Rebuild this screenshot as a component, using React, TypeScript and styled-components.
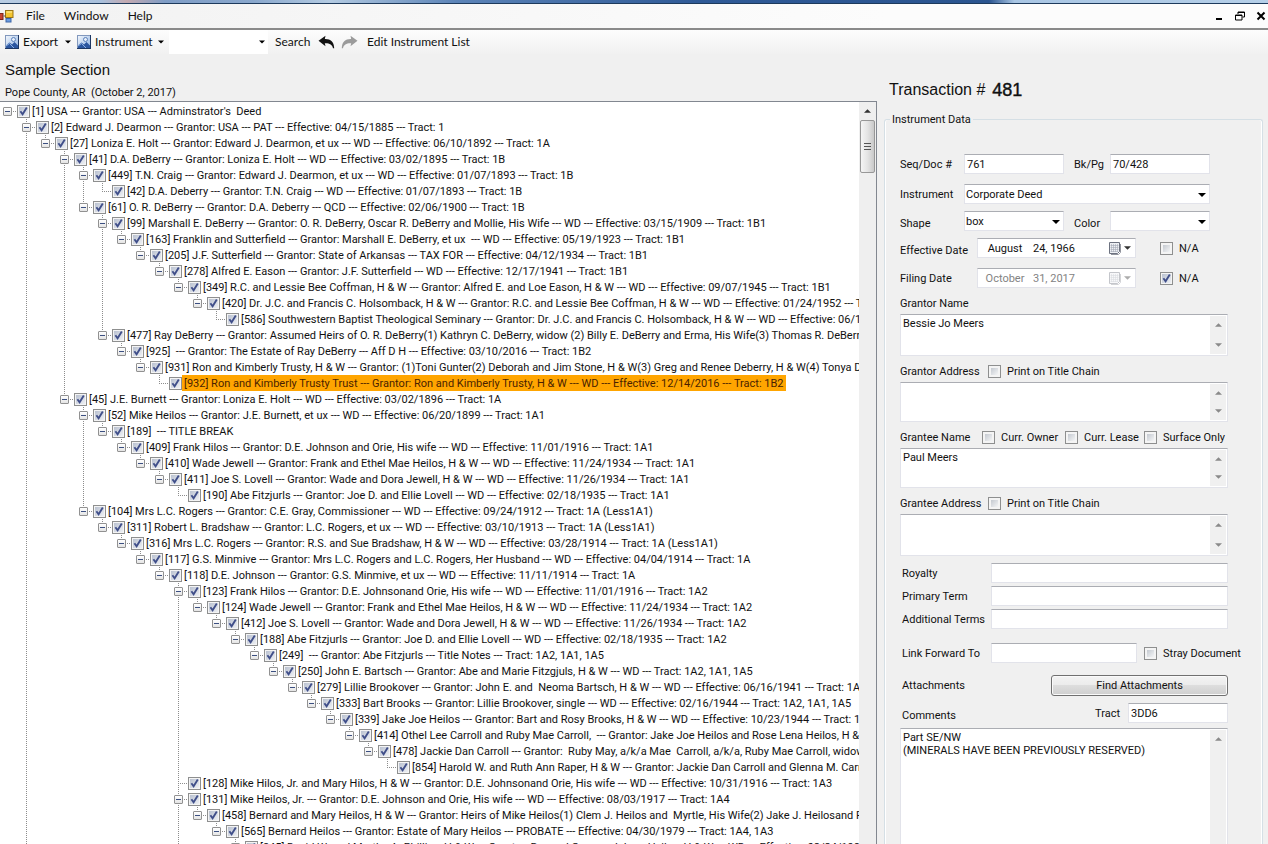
import React from "react";
import styled, { createGlobalStyle, css } from "styled-components";

const GlobalStyle = createGlobalStyle`
  *, *::before, *::after { box-sizing: border-box; }
  body {
    margin: 0;
    background: #f0f0f0;
    color: #111;
    font: 11px/16px Roboto, "Liberation Sans", Arial, sans-serif;
  }
  input, textarea, select, button { font: inherit; color: inherit; margin: 0; }
`;

const Window = styled.div`
  display: flex;
  flex-direction: column;
  height: 100vh;
  overflow: hidden;
`;

const TitleStrip = styled.div`
  flex: none;
  height: 4px;
  border-bottom: 1px solid #1d3a5c;
  background: linear-gradient(90deg, #b9cde3 0, #a9c0dc 8%, #c3a9b0 10%, #7f9dc6 13%, #8aa8cd 20%, #b4cbe2 26%, #5c84b8 36%, #2f5a97 55%, #2b5590 78%, #a9c6e4 80%, #b5cfe8 100%);
`;

const MenuBar = styled.nav`
  flex: none;
  display: flex;
  align-items: center;
  height: 26px;
  border-bottom: 2px solid #8a8a8a;
  background: linear-gradient(90deg, #f2f2f2, #fcfcfc 70%);
  font: 12px/16px Lato, "Noto Sans", sans-serif;
`;

const MenuItems = styled.div`
  display: flex;
  gap: 19px;
  margin-left: 12px;
`;

const MenuItem = styled.button`
  padding: 0;
  border: 0;
  background: none;
`;

const WindowButtons = styled.div`
  display: flex;
  margin: 0 -3px 0 auto;
`;

const WindowButton = styled.button`
  display: grid;
  place-items: center;
  width: 21px;
  height: 16px;
  padding: 0;
  border: 0;
  background: none;
`;

const ToolBar = styled.div`
  flex: none;
  display: flex;
  align-items: center;
  height: 24px;
  padding-left: 5px;
  background: linear-gradient(#fdfdfd, #f1f1f1);
  font: 12px/16px Lato, "Noto Sans", sans-serif;
`;

const ToolButton = styled.button<{ $width?: number; $after?: number }>`
  display: flex;
  align-items: center;
  gap: 4px;
  width: ${(p) => (p.$width ? `${p.$width}px` : "auto")};
  margin-right: ${(p) => p.$after ?? 0}px;
  padding: 0;
  border: 0;
  background: none;
  white-space: nowrap;

  svg { flex: none; }
  > svg:last-child:not(:first-child) { margin-left: auto; }
`;

const SearchBox = styled.label`
  display: flex;
  align-items: center;
  width: 99px;
  height: 24px;
  margin: 0 7px 0 4px;
  padding-right: 3px;
  background: #fff;

  input { flex: 1; min-width: 0; height: 100%; border: 0; outline: 0; background: none; }
`;

const Body = styled.div`
  flex: 1;
  display: flex;
  min-height: 0;
`;

const TreeColumn = styled.section`
  flex: 1;
  display: flex;
  flex-direction: column;
  min-width: 0;
`;

const SectionTitle = styled.h1`
  margin: 0;
  padding: 6px 5px 0;
  font: 400 15px/20px "Liberation Sans", Arial, sans-serif;
`;

const County = styled.p`
  margin: 0;
  padding: 5px 5px 0;
  white-space: pre;
`;

const TreeFrame = styled.div`
  flex: 1;
  display: flex;
  min-height: 0;
  border: 1px solid #828790;
  border-width: 1px 1px 0 0;
  background: #fff;
`;

const Tree = styled.ul`
  flex: 1;
  min-width: 0;
  margin: 0;
  padding: 1px 0 0;
  overflow: hidden;
  list-style: none;
`;

const TreeRow = styled.li`
  display: flex;
  align-items: center;
  height: 16px;
`;

const dots = "#8c8c8c 0 1px, transparent 1px 2px";

const Guide = styled.span<{ $line: boolean }>`
  flex: none;
  width: 19px;
  height: 16px;
  ${(p) =>
    p.$line &&
    css`background: repeating-linear-gradient(${dots}) 7px 0 / 1px 100% no-repeat;`}
`;

const Branch = styled.span<{ $up: boolean; $down: boolean }>`
  flex: none;
  width: 17px;
  height: 16px;
  padding: 4px 3px;
  background:
    repeating-linear-gradient(${dots}) 7px 0 / 1px ${(p) => (p.$down ? "100%" : p.$up ? "8px" : "0")} no-repeat,
    repeating-linear-gradient(90deg, ${dots}) 7px 8px / 10px 1px no-repeat;
`;

const Expander = styled.button`
  display: block;
  width: 9px;
  height: 9px;
  padding: 0;
  border: 1px solid #919191;
  border-radius: 1px;
  background: linear-gradient(#3b4f81, #3b4f81) 1px 3px / 5px 1px no-repeat, linear-gradient(#fff, #e4e4e4);
`;

const Tick = styled.input.attrs({ type: "checkbox" })`
  appearance: none;
  flex: none;
  width: 13px;
  height: 13px;
  border: 1px solid #8e8f8f;
  background: linear-gradient(135deg, #c4c9d0, #f4f5f6) 2px 2px / 7px 7px no-repeat, #f4f4f4;

  &:checked {
    background:
      url("data:image/svg+xml,%3Csvg xmlns='http://www.w3.org/2000/svg' viewBox='0 0 11 11'%3E%3Cpath d='M2.4 5.2 4.6 8.2 8.8 1.6' fill='none' stroke='%23404f8a' stroke-width='1.9'/%3E%3C/svg%3E") 0 0 / 11px 11px no-repeat,
      linear-gradient(135deg, #b9c1d0, #eef0f4) 1px 1px / 9px 9px no-repeat,
      #f4f4f4;
  }
`;

const NodeText = styled.label<{ $selected: boolean }>`
  flex: none;
  height: 16px;
  padding: 0 2px;
  line-height: 18px;
  white-space: pre;
  background: ${(p) => (p.$selected ? "#ffa500" : "none")};
  color: ${(p) => (p.$selected ? "#4a1f00" : "inherit")};
`;

const ScrollBar = styled.div`
  flex: none;
  display: flex;
  flex-direction: column;
  align-items: center;
  width: 17px;
  background: #efefef;
`;

const ScrollArrow = styled.button`
  display: grid;
  place-items: center;
  width: 100%;
  height: 18px;
  padding: 0;
  border: 0;
  background: none;
`;

const ScrollThumb = styled.div`
  display: flex;
  flex-direction: column;
  align-items: center;
  justify-content: center;
  gap: 2px;
  width: 15px;
  height: 53px;
  border: 1px solid #979797;
  border-radius: 2px;
  background: linear-gradient(90deg, #f5f5f5, #e4e4e4 50%, #c9c9c9);

  i { width: 7px; height: 1px; background: #555; }
`;

const DetailColumn = styled.section`
  flex: none;
  display: flex;
  flex-direction: column;
  width: 391px;
  padding: 26px 5px 0 7px;
`;

const Transaction = styled.h2`
  display: flex;
  align-items: center;
  gap: 7px;
  margin: 0;
  padding-left: 5px;
  font: 400 16px/20px "Liberation Sans", Arial, sans-serif;

  strong { font-size: 18px; font-weight: 400; -webkit-text-stroke: 0.4px #111; }
`;

const Group = styled.fieldset`
  flex: 1;
  min-width: 0;
  min-height: 0;
  margin: 11px 0 0;
  padding: 27px 34px 0 15px;
  border: 1px solid #d5dfe5;
  border-width: 1px 1px 0;
  border-radius: 3px 3px 0 0;
  box-shadow: inset 1px 0 #fff, inset -1px 0 #fff;

  legend { height: 16px; margin-left: -10px; padding: 0 2px; line-height: 18px; }
`;

const Form = styled.form`
  display: flex;
  flex-direction: column;
  height: 100%;
`;

const Row = styled.div<{ $gap: number }>`
  flex: none;
  display: flex;
  align-items: center;
  height: 20px;
  margin-top: ${(p) => p.$gap}px;
  white-space: nowrap;
`;

const Caption = styled.label<{ $width?: number; $end?: boolean; $low?: boolean; $indent?: boolean }>`
  flex: none;
  align-self: ${(p) => (p.$low ? "flex-end" : "center")};
  height: 16px;
  width: ${(p) => (p.$width ? `${p.$width}px` : "auto")};
  margin-left: ${(p) => (p.$end ? "auto" : "0")};
  padding-left: ${(p) => (p.$indent ? "2px" : "0")};
  line-height: 18px;
`;

const CaptionMid = styled.label<{ $low?: boolean }>`
  flex: none;
  align-self: ${(p) => (p.$low ? "flex-end" : "center")};
  width: 46px;
  height: 16px;
  padding-left: 10px;
  line-height: 18px;
`;

const field = css`
  border: 1px solid #e2e3ea;
  border-top-color: #abadb3;
  border-radius: 0;
  background: #fff;
  outline: 0;
`;

const TextInput = styled.input<{ $width?: number }>`
  ${field}
  flex: ${(p) => (p.$width ? "none" : "1")};
  width: ${(p) => (p.$width ? `${p.$width}px` : "auto")};
  min-width: 0;
  height: 20px;
  padding: 0 2px;
`;

const SelectBox = styled.span<{ $width: number }>`
  position: relative;
  flex: none;
  width: ${(p) => p.$width}px;

  select {
    ${field}
    appearance: none;
    display: block;
    width: 100%;
    height: 20px;
    padding: 1px 18px 0 1px;
  }

  svg {
    position: absolute;
    top: 9px;
    right: 4px;
    pointer-events: none;
  }
`;

const DateBox = styled.span<{ $off?: boolean }>`
  ${field}
  display: flex;
  align-items: center;
  width: 159px;
  height: 20px;
  margin-right: 24px;
  padding: 0 4px 0 6px;
  color: ${(p) => (p.$off ? "#838383" : "inherit")};

  input { border: 0; padding: 1px 0 0; background: none; }
  input:first-child { width: 42px; text-align: center; }
  input:nth-child(2) { width: 70px; padding-left: 7px; }
  button {
    display: flex;
    align-items: center;
    gap: 3px;
    margin-left: auto;
    padding: 0;
    border: 0;
    background: none;
    opacity: ${(p) => (p.$off ? 0.4 : 1)};
  }
`;

const CheckLabel = styled.label<{ $before?: number; $width?: number }>`
  flex: none;
  display: flex;
  align-items: center;
  gap: 6px;
  width: ${(p) => (p.$width ? `${p.$width}px` : "auto")};
  margin-left: ${(p) => p.$before ?? 0}px;

  span { height: 16px; line-height: 18px; }
`;

const AreaHead = styled.div`
  flex: none;
  display: flex;
  align-items: center;
  height: 26px;
  padding-top: 4px;
  white-space: nowrap;
`;

const AreaBox = styled.div<{ $height?: number }>`
  ${field}
  flex: ${(p) => (p.$height ? "none" : "1")};
  display: flex;
  height: ${(p) => (p.$height ? `${p.$height}px` : "auto")};
  padding: 1px;

  textarea {
    flex: 1;
    min-width: 0;
    padding: 1px;
    border: 0;
    outline: 0;
    resize: none;
    overflow: hidden;
    background: none;
    line-height: 13px;
  }
`;

const AreaScroll = styled.div`
  flex: none;
  display: flex;
  flex-direction: column;
  justify-content: space-between;
  width: 16px;
  background: #f0f0f0;
`;

const CommentSpace = styled.div`
  flex: 1 0 150px;
  display: flex;
  margin-top: 5px;
`;

const PushButton = styled.button`
  width: 177px;
  height: 21px;
  margin-left: auto;
  padding: 1px 0 0;
  border: 1px solid #707070;
  border-radius: 3px;
  background: linear-gradient(#f3f3f3, #ebebeb 50%, #dddddd 50%, #cfcfcf);
  box-shadow: inset 0 0 0 1px #fafafa;
`;

const Caret = ({ size = 7, up = false, color = "#000" }: { size?: number; up?: boolean; color?: string }) => (
  <svg width={size} height="4" viewBox="0 0 8 4" aria-hidden="true">
    <path d={up ? "M0 4h8L4 0z" : "M0 0h8L4 4z"} fill={color} />
  </svg>
);

const AppIcon = () => (
  <svg width="14" height="14" viewBox="0 0 14 14" aria-hidden="true">
    <rect x="-3" y="4.500" width="6" height="6" fill="#c8442f" stroke="#7d2419" />
    <rect x="5.500" y="1.500" width="7.500" height="7" fill="#f3c52f" stroke="#9a7414" />
    <path d="M6.500 3h5.500" stroke="#fff0a8" />
    <rect x="6" y="9.500" width="5" height="3.500" fill="#6a9be0" stroke="#3c66a8" />
    <path d="M3.500 7h2" stroke="#555" />
  </svg>
);

const PictureIcon = () => (
  <svg width="14" height="14" viewBox="0 0 14 14" aria-hidden="true">
    <defs>
      <linearGradient id="sky" x1="0" y1="0" x2="1" y2="1">
        <stop offset="0" stopColor="#f4f8fd" />
        <stop offset="1" stopColor="#8fb2e2" />
      </linearGradient>
    </defs>
    <rect x=".5" y=".5" width="13" height="13" fill="url(#sky)" stroke="#8298bd" />
    <circle cx="8.500" cy="4.500" r="2" fill="#e6eef9" stroke="#5b80ba" />
    <path d="M1 10.500 4.500 7.500 7 9.500 9.500 7 13 10.500V13H1z" fill="#2b56a0" />
    <path d="M1 11 4.500 8.500 9 13" fill="none" stroke="#8fb2e4" />
    <path d="M13.500 0v14M0 13.500h14" stroke="#1d3763" />
  </svg>
);

const BackArrow = ({ color, flip = false }: { color: string; flip?: boolean }) => (
  <svg width="17" height="14" viewBox="0 0 17 14" aria-hidden="true">
    <path
      transform={flip ? "matrix(-1 0 0 1 17 0)" : undefined}
      d="M0.500 5.800 7.500 0.800 6.800 4C12.500 3.800 16 6.500 16.200 13.200L15 13.200C14.300 9.500 11.500 8 6.800 8.200L7.500 11.200Z"
      fill={color}
    />
  </svg>
);

const CalendarIcon = () => (
  <svg width="12" height="13" viewBox="0 0 12 13" aria-hidden="true">
    <path d="M.5.500h10v9l-2 2H.5z" fill="#eef0f4" stroke="#6d7280" />
    <path d="M2.500 2v8M4.500 2v8M6.500 2v8M8.500 2v8M1.500 3.500h8M1.500 5.500h8M1.500 7.500h8M1.500 9.500h7" stroke="#a4aab6" strokeWidth=".6" />
    <path d="M11.500 2v8.500l-2 2H2" fill="none" stroke="#92959e" />
  </svg>
);

type Node = [depth: number, text: string];

const nodes: Node[] = [
  [0, "[1] USA --- Grantor: USA --- Adminstrator's  Deed"],
  [1, "[2] Edward J. Dearmon --- Grantor: USA --- PAT --- Effective: 04/15/1885 --- Tract: 1"],
  [2, "[27] Loniza E. Holt --- Grantor: Edward J. Dearmon, et ux --- WD --- Effective: 06/10/1892 --- Tract: 1A"],
  [3, "[41] D.A. DeBerry --- Grantor: Loniza E. Holt --- WD --- Effective: 03/02/1895 --- Tract: 1B"],
  [4, "[449] T.N. Craig --- Grantor: Edward J. Dearmon, et ux --- WD --- Effective: 01/07/1893 --- Tract: 1B"],
  [5, "[42] D.A. Deberry --- Grantor: T.N. Craig --- WD --- Effective: 01/07/1893 --- Tract: 1B"],
  [4, "[61] O. R. DeBerry --- Grantor: D.A. Deberry --- QCD --- Effective: 02/06/1900 --- Tract: 1B"],
  [5, "[99] Marshall E. DeBerry --- Grantor: O. R. DeBerry, Oscar R. DeBerry and Mollie, His Wife --- WD --- Effective: 03/15/1909 --- Tract: 1B1"],
  [6, "[163] Franklin and Sutterfield --- Grantor: Marshall E. DeBerry, et ux  --- WD --- Effective: 05/19/1923 --- Tract: 1B1"],
  [7, "[205] J.F. Sutterfield --- Grantor: State of Arkansas --- TAX FOR --- Effective: 04/12/1934 --- Tract: 1B1"],
  [8, "[278] Alfred E. Eason --- Grantor: J.F. Sutterfield --- WD --- Effective: 12/17/1941 --- Tract: 1B1"],
  [9, "[349] R.C. and Lessie Bee Coffman, H & W --- Grantor: Alfred E. and Loe Eason, H & W --- WD --- Effective: 09/07/1945 --- Tract: 1B1"],
  [10, "[420] Dr. J.C. and Francis C. Holsomback, H & W --- Grantor: R.C. and Lessie Bee Coffman, H & W --- WD --- Effective: 01/24/1952 --- Tract: 1B1"],
  [11, "[586] Southwestern Baptist Theological Seminary --- Grantor: Dr. J.C. and Francis C. Holsomback, H & W --- WD --- Effective: 06/13/1952"],
  [5, "[477] Ray DeBerry --- Grantor: Assumed Heirs of O. R. DeBerry(1) Kathryn C. DeBerry, widow (2) Billy E. DeBerry and Erma, His Wife(3) Thomas R. DeBerry and"],
  [6, "[925]  --- Grantor: The Estate of Ray DeBerry --- Aff D H --- Effective: 03/10/2016 --- Tract: 1B2"],
  [7, "[931] Ron and Kimberly Trusty, H & W --- Grantor: (1)Toni Gunter(2) Deborah and Jim Stone, H & W(3) Greg and Renee Deberry, H & W(4) Tonya Deberry"],
  [8, "[932] Ron and Kimberly Trusty Trust --- Grantor: Ron and Kimberly Trusty, H & W --- WD --- Effective: 12/14/2016 --- Tract: 1B2"],
  [3, "[45] J.E. Burnett --- Grantor: Loniza E. Holt --- WD --- Effective: 03/02/1896 --- Tract: 1A"],
  [4, "[52] Mike Heilos --- Grantor: J.E. Burnett, et ux --- WD --- Effective: 06/20/1899 --- Tract: 1A1"],
  [5, "[189]  --- TITLE BREAK"],
  [6, "[409] Frank Hilos --- Grantor: D.E. Johnson and Orie, His wife --- WD --- Effective: 11/01/1916 --- Tract: 1A1"],
  [7, "[410] Wade Jewell --- Grantor: Frank and Ethel Mae Heilos, H & W --- WD --- Effective: 11/24/1934 --- Tract: 1A1"],
  [8, "[411] Joe S. Lovell --- Grantor: Wade and Dora Jewell, H & W --- WD --- Effective: 11/26/1934 --- Tract: 1A1"],
  [9, "[190] Abe Fitzjurls --- Grantor: Joe D. and Ellie Lovell --- WD --- Effective: 02/18/1935 --- Tract: 1A1"],
  [4, "[104] Mrs L.C. Rogers --- Grantor: C.E. Gray, Commissioner --- WD --- Effective: 09/24/1912 --- Tract: 1A (Less1A1)"],
  [5, "[311] Robert L. Bradshaw --- Grantor: L.C. Rogers, et ux --- WD --- Effective: 03/10/1913 --- Tract: 1A (Less1A1)"],
  [6, "[316] Mrs L.C. Rogers --- Grantor: R.S. and Sue Bradshaw, H & W --- WD --- Effective: 03/28/1914 --- Tract: 1A (Less1A1)"],
  [7, "[117] G.S. Minmive --- Grantor: Mrs L.C. Rogers and L.C. Rogers, Her Husband --- WD --- Effective: 04/04/1914 --- Tract: 1A"],
  [8, "[118] D.E. Johnson --- Grantor: G.S. Minmive, et ux --- WD --- Effective: 11/11/1914 --- Tract: 1A"],
  [9, "[123] Frank Hilos --- Grantor: D.E. Johnsonand Orie, His wife --- WD --- Effective: 11/01/1916 --- Tract: 1A2"],
  [10, "[124] Wade Jewell --- Grantor: Frank and Ethel Mae Heilos, H & W --- WD --- Effective: 11/24/1934 --- Tract: 1A2"],
  [11, "[412] Joe S. Lovell --- Grantor: Wade and Dora Jewell, H & W --- WD --- Effective: 11/26/1934 --- Tract: 1A2"],
  [12, "[188] Abe Fitzjurls --- Grantor: Joe D. and Ellie Lovell --- WD --- Effective: 02/18/1935 --- Tract: 1A2"],
  [13, "[249]  --- Grantor: Abe Fitzjurls --- Title Notes --- Tract: 1A2, 1A1, 1A5"],
  [14, "[250] John E. Bartsch --- Grantor: Abe and Marie Fitzgjuls, H & W --- WD --- Tract: 1A2, 1A1, 1A5"],
  [15, "[279] Lillie Brookover --- Grantor: John E. and  Neoma Bartsch, H & W --- WD --- Effective: 06/16/1941 --- Tract: 1A2, 1A1"],
  [16, "[333] Bart Brooks --- Grantor: Lillie Brookover, single --- WD --- Effective: 02/16/1944 --- Tract: 1A2, 1A1, 1A5"],
  [17, "[339] Jake Joe Heilos --- Grantor: Bart and Rosy Brooks, H & W --- WD --- Effective: 10/23/1944 --- Tract: 1A2, 1A1"],
  [18, "[414] Othel Lee Carroll and Ruby Mae Carroll,  --- Grantor: Jake Joe Heilos and Rose Lena Heilos, H & W --- WD"],
  [19, "[478] Jackie Dan Carroll --- Grantor:  Ruby May, a/k/a Mae  Carroll, a/k/a, Ruby Mae Carroll, widow --- WD"],
  [20, "[854] Harold W. and Ruth Ann Raper, H & W --- Grantor: Jackie Dan Carroll and Glenna M. Carroll, H & W"],
  [9, "[128] Mike Hilos, Jr. and Mary Hilos, H & W --- Grantor: D.E. Johnsonand Orie, His wife --- WD --- Effective: 10/31/1916 --- Tract: 1A3"],
  [9, "[131] Mike Heilos, Jr. --- Grantor: D.E. Johnson and Orie, His wife --- WD --- Effective: 08/03/1917 --- Tract: 1A4"],
  [10, "[458] Bernard and Mary Heilos, H & W --- Grantor: Heirs of Mike Heilos(1) Clem J. Heilos and  Myrtle, His Wife(2) Jake J. Heilosand Rose"],
  [11, "[565] Bernard Heilos --- Grantor: Estate of Mary Heilos --- PROBATE --- Effective: 04/30/1979 --- Tract: 1A4, 1A3"],
  [12, "[845] David W. and Martha A. Phillips, H & W --- Grantor: Bernard Gene and Joan Heilos, H & W --- WD --- Effective: 02/24/1984"],
];

const SELECTED = 17;

/* Depths whose branches have more siblings past the last loaded row. */
const OPEN_DEPTHS = [1, 9];

/* A guide runs on below a row while a later sibling waits at that depth. */
const continues = (index: number, depth: number) => {
  for (let i = index + 1; i < nodes.length; i++) {
    if (nodes[i][0] < depth) return false;
    if (nodes[i][0] === depth) return true;
  }
  return OPEN_DEPTHS.includes(depth);
};

const TreeNode = ({ index }: { index: number }) => {
  const [depth, text] = nodes[index];
  const isLast = index === nodes.length - 1;
  const hasChildren = isLast || nodes[index + 1][0] > depth;
  return (
    <TreeRow role="treeitem" aria-level={depth + 1} aria-selected={index === SELECTED}>
      {Array.from({ length: depth }, (_, d) => (
        <Guide key={d} $line={continues(index, d)} />
      ))}
      <Branch $up={depth > 0} $down={continues(index, depth)}>
        {hasChildren && <Expander type="button" aria-label="Collapse" />}
      </Branch>
      <Tick id={`node-${index}`} defaultChecked />
      <NodeText htmlFor={`node-${index}`} $selected={index === SELECTED}>{text}</NodeText>
    </TreeRow>
  );
};

const Check = ({ text, checked, width, before }: { text: string; checked?: boolean; width?: number; before?: number }) => (
  <CheckLabel $width={width} $before={before}>
    <Tick defaultChecked={checked} />
    <span>{text}</span>
  </CheckLabel>
);

const Area = ({ id, value, height }: { id: string; value?: string; height?: number }) => (
  <AreaBox $height={height}>
    <textarea id={id} defaultValue={value} />
    <AreaScroll>
      <ScrollArrow type="button" aria-label="Scroll up"><Caret up color="#8a8a8a" /></ScrollArrow>
      <ScrollArrow type="button" aria-label="Scroll down"><Caret color="#8a8a8a" /></ScrollArrow>
    </AreaScroll>
  </AreaBox>
);

const Select = ({ id, width, value }: { id: string; width: number; value: string }) => (
  <SelectBox $width={width}>
    <select id={id} defaultValue={value}><option>{value}</option></select>
    <Caret size={8} />
  </SelectBox>
);

const DateField = ({ id, month, day, off }: { id: string; month: string; day: string; off?: boolean }) => (
  <DateBox $off={off}>
    <input id={id} defaultValue={month} disabled={off} />
    <input aria-label="Day and year" defaultValue={day} disabled={off} />
    <button type="button" aria-label="Open calendar" disabled={off}>
      <CalendarIcon />
      <Caret color="#333" />
    </button>
  </DateBox>
);

export default function App() {
  return (
    <Window>
      <GlobalStyle />
      <TitleStrip />
      <MenuBar>
        <AppIcon />
        <MenuItems>
          <MenuItem>File</MenuItem>
          <MenuItem>Window</MenuItem>
          <MenuItem>Help</MenuItem>
        </MenuItems>
        <WindowButtons>
          <WindowButton aria-label="Minimize">
            <svg width="10" height="10" viewBox="0 0 10 10"><path d="M2 8h6" stroke="#000" strokeWidth="2" /></svg>
          </WindowButton>
          <WindowButton aria-label="Restore">
            <svg width="10" height="10" viewBox="0 0 10 10"><path d="M3 3V1h6.500v5H7.500M3 1.500h6.500M.5 4h6.500v5H.5zM.5 4.500h6.500" fill="none" stroke="#000" /></svg>
          </WindowButton>
          <WindowButton aria-label="Close">
            <svg width="10" height="10" viewBox="0 0 10 10"><path d="M1.500 1.500l7 7M8.500 1.500l-7 7" stroke="#000" strokeWidth="2" /></svg>
          </WindowButton>
        </WindowButtons>
      </MenuBar>
      <ToolBar>
        <ToolButton $width={66} $after={6}><PictureIcon />Export<Caret size={6} /></ToolButton>
        <ToolButton $width={87} $after={1}><PictureIcon />Instrument<Caret size={6} /></ToolButton>
        <SearchBox>
          <input aria-label="Search text" />
          <Caret size={6} />
        </SearchBox>
        <ToolButton $width={43}>Search</ToolButton>
        <ToolButton $width={23} aria-label="Undo"><BackArrow color="#111" /></ToolButton>
        <ToolButton $width={26} aria-label="Redo"><BackArrow color="#9b9b9b" flip /></ToolButton>
        <ToolButton>Edit Instrument List</ToolButton>
      </ToolBar>
      <Body>
        <TreeColumn>
          <SectionTitle>Sample Section</SectionTitle>
          <County>Pope County, AR  (October 2, 2017)</County>
          <TreeFrame>
            <Tree role="tree">
              {nodes.map((_, i) => <TreeNode key={i} index={i} />)}
            </Tree>
            <ScrollBar>
              <ScrollArrow aria-label="Scroll up"><Caret up color="#333" /></ScrollArrow>
              <ScrollThumb><i /><i /><i /></ScrollThumb>
            </ScrollBar>
          </TreeFrame>
        </TreeColumn>
        <DetailColumn>
          <Transaction>Transaction # <strong>481</strong></Transaction>
          <Group>
            <legend>Instrument Data</legend>
            <Form>
              <Row $gap={0}>
                <Caption $width={64} htmlFor="seq">Seq/Doc #</Caption>
                <TextInput id="seq" $width={100} defaultValue="761" />
                <CaptionMid htmlFor="bk">Bk/Pg</CaptionMid>
                <TextInput id="bk" $width={100} defaultValue="70/428" />
              </Row>
              <Row $gap={10}>
                <Caption $width={64} htmlFor="instrument">Instrument</Caption>
                <Select id="instrument" width={246} value="Corporate Deed" />
              </Row>
              <Row $gap={7}>
                <Caption $low $width={64} htmlFor="shape">Shape</Caption>
                <Select id="shape" width={100} value="box" />
                <CaptionMid $low htmlFor="color">Color</CaptionMid>
                <Select id="color" width={100} value="" />
              </Row>
              <Row $gap={7}>
                <Caption $low $width={77} htmlFor="effective">Effective Date</Caption>
                <DateField id="effective" month="August" day="24, 1966" />
                <Check text="N/A" />
              </Row>
              <Row $gap={10}>
                <Caption $width={77} htmlFor="filing">Filing Date</Caption>
                <DateField id="filing" month="October" day="31, 2017" off />
                <Check text="N/A" checked />
              </Row>
              <AreaHead><Caption htmlFor="grantor">Grantor Name</Caption></AreaHead>
              <Area id="grantor" value="Bessie Jo Meers" height={42} />
              <AreaHead>
                <Caption $width={88} htmlFor="grantor-address">Grantor Address</Caption>
                <Check text="Print on Title Chain" />
              </AreaHead>
              <Area id="grantor-address" height={40} />
              <AreaHead>
                <Caption $width={82} htmlFor="grantee">Grantee Name</Caption>
                <Check text="Curr. Owner" width={83} />
                <Check text="Curr. Lease" width={79} />
                <Check text="Surface Only" />
              </AreaHead>
              <Area id="grantee" value="Paul Meers" height={40} />
              <AreaHead>
                <Caption $width={88} htmlFor="grantee-address">Grantee Address</Caption>
                <Check text="Print on Title Chain" />
              </AreaHead>
              <Area id="grantee-address" height={42} />
              <Row $gap={7}>
                <Caption $indent $width={91} htmlFor="royalty">Royalty</Caption>
                <TextInput id="royalty" />
              </Row>
              <Row $gap={3}>
                <Caption $indent $width={91} htmlFor="primary">Primary Term</Caption>
                <TextInput id="primary" />
              </Row>
              <Row $gap={3}>
                <Caption $indent $width={91} htmlFor="additional">Additional Terms</Caption>
                <TextInput id="additional" />
              </Row>
              <Row $gap={14}>
                <Caption $indent $width={91} htmlFor="link">Link Forward To</Caption>
                <TextInput id="link" $width={146} />
                <Check text="Stray Document" before={7} />
              </Row>
              <Row $gap={12}>
                <Caption as="span" $indent>Attachments</Caption>
                <PushButton type="button">Find Attachments</PushButton>
              </Row>
              <Row $gap={8}>
                <Caption $low $indent htmlFor="comments">Comments</Caption>
                <Caption $end $width={33} htmlFor="tract">Tract</Caption>
                <TextInput id="tract" $width={100} defaultValue="3DD6" />
              </Row>
              <CommentSpace>
                <Area id="comments" value={"Part SE/NW\n(MINERALS HAVE BEEN PREVIOUSLY RESERVED)"} />
              </CommentSpace>
            </Form>
          </Group>
        </DetailColumn>
      </Body>
    </Window>
  );
}
